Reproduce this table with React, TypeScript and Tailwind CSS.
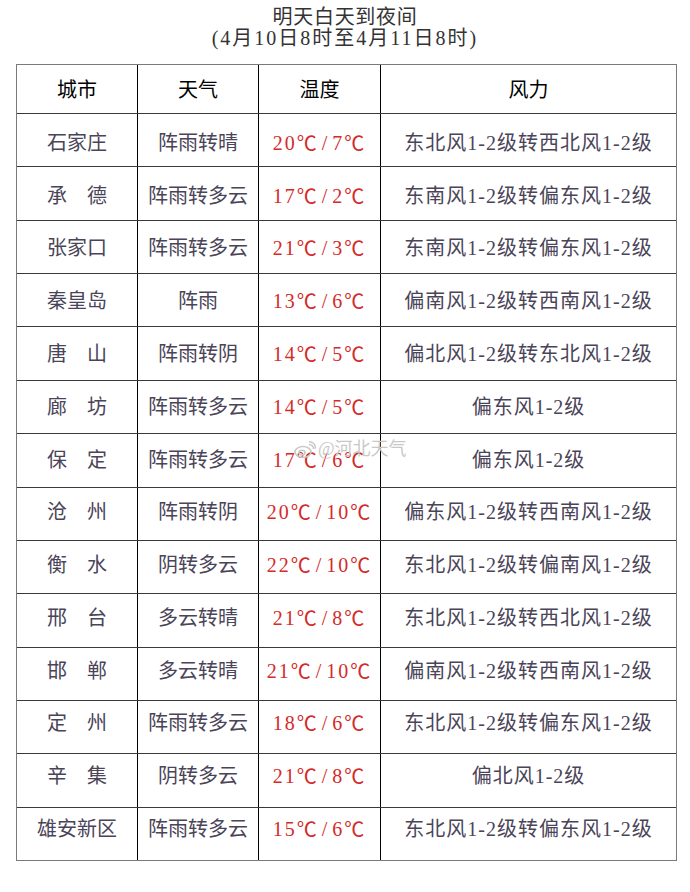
import React from "react"

const rows = [
  ["石家庄", "阵雨转晴", "20℃/7℃", "东北风1-2级转西北风1-2级"],
  ["承　德", "阵雨转多云", "17℃/2℃", "东南风1-2级转偏东风1-2级"],
  ["张家口", "阵雨转多云", "21℃/3℃", "东南风1-2级转偏东风1-2级"],
  ["秦皇岛", "阵雨", "13℃/6℃", "偏南风1-2级转西南风1-2级"],
  ["唐　山", "阵雨转阴", "14℃/5℃", "偏北风1-2级转东北风1-2级"],
  ["廊　坊", "阵雨转多云", "14℃/5℃", "偏东风1-2级"],
  ["保　定", "阵雨转多云", "17℃/6℃", "偏东风1-2级"],
  ["沧　州", "阵雨转阴", "20℃/10℃", "偏东风1-2级转西南风1-2级"],
  ["衡　水", "阴转多云", "22℃/10℃", "东北风1-2级转偏南风1-2级"],
  ["邢　台", "多云转晴", "21℃/8℃", "东北风1-2级转西北风1-2级"],
  ["邯　郸", "多云转晴", "21℃/10℃", "偏南风1-2级转西南风1-2级"],
  ["定　州", "阵雨转多云", "18℃/6℃", "东北风1-2级转偏东风1-2级"],
  ["辛　集", "阴转多云", "21℃/8℃", "偏北风1-2级"],
  ["雄安新区", "阵雨转多云", "15℃/6℃", "东北风1-2级转偏东风1-2级"],
]

const font = { fontFamily: '"Liberation Serif", "Noto Sans CJK SC", serif' }
const cjk = { fontFamily: '"Noto Sans CJK SC", sans-serif' }

// "20℃/7℃" -> digits in serif, ℃ as a CJK glyph
function Temp({ value }: { value: string }) {
  const [hi, lo] = value.split("/")
  return (
    <span className="flex items-center">
      <span>{hi.replace("℃", "")}</span>
      <span style={cjk}>℃</span>
      <span className="mx-[3px]">/</span>
      <span>{lo.replace("℃", "")}</span>
      <span style={cjk}>℃</span>
    </span>
  )
}

function WeiboMark() {
  return (
    <svg width="22" height="18" viewBox="0 0 22 18" fill="none" stroke="#c8c8c8" strokeWidth="1.6">
      <ellipse cx="9" cy="11" rx="8" ry="5.5" />
      <ellipse cx="8" cy="11.5" rx="3" ry="2.3" />
      <path d="M15 3.5c2.5 0 4.5 2 4.5 4.5" />
      <path d="M15 0.8c4 0 6.5 3 6.5 7" />
    </svg>
  )
}

// text in the source image drifts up a little against the grid lines, row by row
function cellShift(i: number) {
  const off = 2.7 - 0.59 * i
  return off >= 0 ? { paddingTop: off * 2 } : { paddingBottom: -off * 2 }
}

export default function App() {
  return (
    <div className="relative w-[690px] h-[892px] bg-white" style={font}>
      <div className="pt-[7px] text-center text-[20px] leading-[21px] text-[#333]">
        <p className="tracking-[0.7px]">明天白天到夜间</p>
        <p className="tracking-[2px]">(4月10日8时至4月11日8时)</p>
      </div>

      <div className="mt-[15px] ml-[16px] w-[661px] border border-[#7a7a7a]">
        <div className="grid grid-cols-[120px_121px_122px_296px] h-[48px] text-[20px] text-black">
          <div className="flex items-center justify-center pt-[2px]">城市</div>
          <div className="flex items-center justify-center pt-[2px] border-l border-black">天气</div>
          <div className="flex items-center justify-center pt-[2px] border-l border-black">温度</div>
          <div className="flex items-center justify-center pt-[2px] border-l border-black">风力</div>
        </div>
        {rows.map((r, i) => {
          const s = cellShift(i)
          return (
            <div
              key={i}
              className="grid grid-cols-[120px_121px_122px_296px] h-[53.36px] border-t border-[#3a3a3a] text-[20px] text-[#4a4458]"
            >
              <div className="flex items-center justify-center whitespace-pre" style={s}>{r[0]}</div>
              <div className="flex items-center justify-center border-l border-black" style={s}>{r[1]}</div>
              <div className="flex items-center justify-center border-l border-black text-[#d42a2a] tracking-[2px]" style={s}>
                <Temp value={r[2]} />
              </div>
              <div className="flex items-center justify-center border-l border-black tracking-[1px]" style={s}>{r[3]}</div>
            </div>
          )
        })}
      </div>

      <div className="absolute left-[294px] top-[436px] flex items-center gap-[2px] text-[18px] text-[#c8c8c8]">
        <WeiboMark />
        <span>@河北天气</span>
      </div>
    </div>
  )
}
